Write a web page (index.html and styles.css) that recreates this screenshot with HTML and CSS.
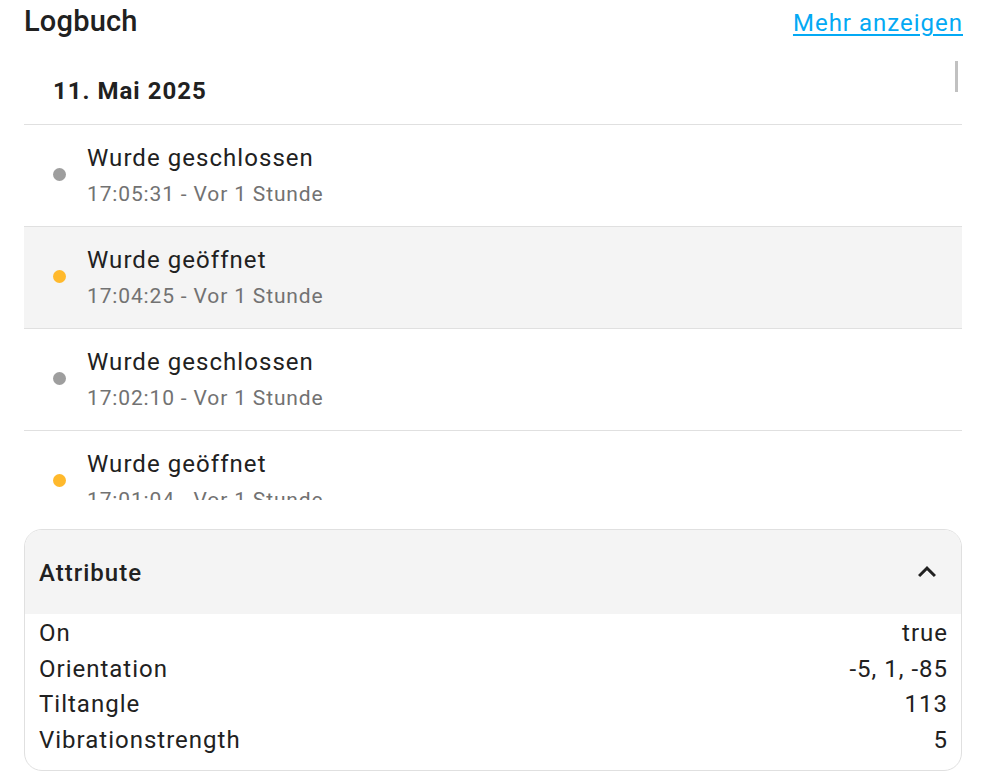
FILE: index.html
```html
<!DOCTYPE html>
<html lang="de">
	<head>
		<meta charset="utf-8" />
		<title>Logbuch</title>
		<link rel="stylesheet" href="styles.css">
	</head>
	<body>
		<div class="page">
			<div class="log-head">
				<h2 class="log-title">Logbuch</h2>
				<a class="more" href="#">Mehr anzeigen</a>
			</div>
			<div class="log-list">
				<div class="log-date">11. Mai 2025</div>
				<div class="entry">
					<span class="dot dot-off"></span>
					<div class="entry-text">
						<div class="entry-msg">Wurde geschlossen</div>
						<div class="entry-time">17:05:31 - Vor 1 Stunde</div>
					</div>
				</div>
				<div class="entry entry-hover">
					<span class="dot dot-on"></span>
					<div class="entry-text">
						<div class="entry-msg">Wurde geöffnet</div>
						<div class="entry-time">17:04:25 - Vor 1 Stunde</div>
					</div>
				</div>
				<div class="entry">
					<span class="dot dot-off"></span>
					<div class="entry-text">
						<div class="entry-msg">Wurde geschlossen</div>
						<div class="entry-time">17:02:10 - Vor 1 Stunde</div>
					</div>
				</div>
				<div class="entry">
					<span class="dot dot-on"></span>
					<div class="entry-text">
						<div class="entry-msg">Wurde geöffnet</div>
						<div class="entry-time">17:01:04 - Vor 1 Stunde</div>
					</div>
				</div>
				<span class="thumb"></span>
			</div>

			<div class="attr">
				<div class="attr-head">
					<span class="attr-title">Attribute</span>
					<svg class="chevron" viewBox="0 0 24 24"><path d="M7.41,15.41L12,10.83L16.59,15.41L18,14L12,8L6,14L7.41,15.41Z"/></svg>
				</div>
				<div class="attr-body">
					<div class="attr-row"><span>On</span><span>true</span></div>
					<div class="attr-row"><span>Orientation</span><span>-5, 1, -85</span></div>
					<div class="attr-row"><span>Tiltangle</span><span>113</span></div>
					<div class="attr-row"><span>Vibrationstrength</span><span>5</span></div>
				</div>
			</div>
		</div>
	</body>
</html>
```

FILE: styles.css
```css
*{margin: 0;padding: 0;box-sizing: border-box;}
body{background: #fff;font-family: Roboto, "Liberation Sans", sans-serif;color: #212121;}
.page
{
	width: 938px;
	margin-left: 24px;
}
.log-head
{
	display: flex;
	justify-content: space-between;
	align-items: baseline;
	height: 56px;
	padding-top: 4px;
}
.log-title
{
	font-size: 29px;
	font-weight: 500;
	line-height: 34px;
	letter-spacing: 0.2px;
}
.more
{
	font-size: 24px;
	color: #03a9f4;
	letter-spacing: 1px;
	margin-right: -1px;
	text-decoration: underline;
	text-underline-offset: 3px;
}
.log-list
{
	position: relative;
	height: 444px;
	overflow: hidden;
}
.log-date
{
	height: 68px;
	padding-left: 29px;
	font-size: 24px;
	font-weight: 700;
	line-height: 70px;
	letter-spacing: 1px;
}
.entry
{
	display: flex;
	align-items: center;
	height: 102px;
	padding: 15px 0 14px 29px;
	border-top: 1px solid #e0e0e0;
}
.entry-hover{background: #f4f4f4;}
.dot
{
	width: 13px;
	height: 13px;
	border-radius: 50%;
	margin: 0 21px 4px 0;
	flex: none;
}
.dot-off{background: #9e9e9e;}
.dot-on{background: #ffb92c;}
.entry-msg
{
	font-size: 24px;
	line-height: 36px;
	letter-spacing: 1.05px;
}
.entry-time
{
	font-size: 21px;
	line-height: 36px;
	color: #727272;
	letter-spacing: 0.85px;
}
.thumb
{
	position: absolute;
	right: 4px;
	top: 5px;
	width: 3px;
	height: 31px;
	background: #c1c1c1;
}
.attr
{
	margin-top: 29px;
	border: 1px solid #e0e0e0;
	border-radius: 18px;
	overflow: hidden;
	height: 242px;
}
.attr-head
{
	display: flex;
	justify-content: space-between;
	align-items: center;
	height: 84px;
	padding: 0 16px 0 14px;
	background: #f4f4f4;
}
.attr-title
{
	font-size: 24px;
	font-weight: 500;
	letter-spacing: 1px;
	padding-top: 2px;
}
.chevron
{
	width: 36px;
	height: 36px;
	fill: #212121;
}
.attr-body{padding: 2px 13px 0 14px;}
.attr-row
{
	display: flex;
	justify-content: space-between;
	font-size: 24px;
	line-height: 35.5px;
	letter-spacing: 1px;
}
```
